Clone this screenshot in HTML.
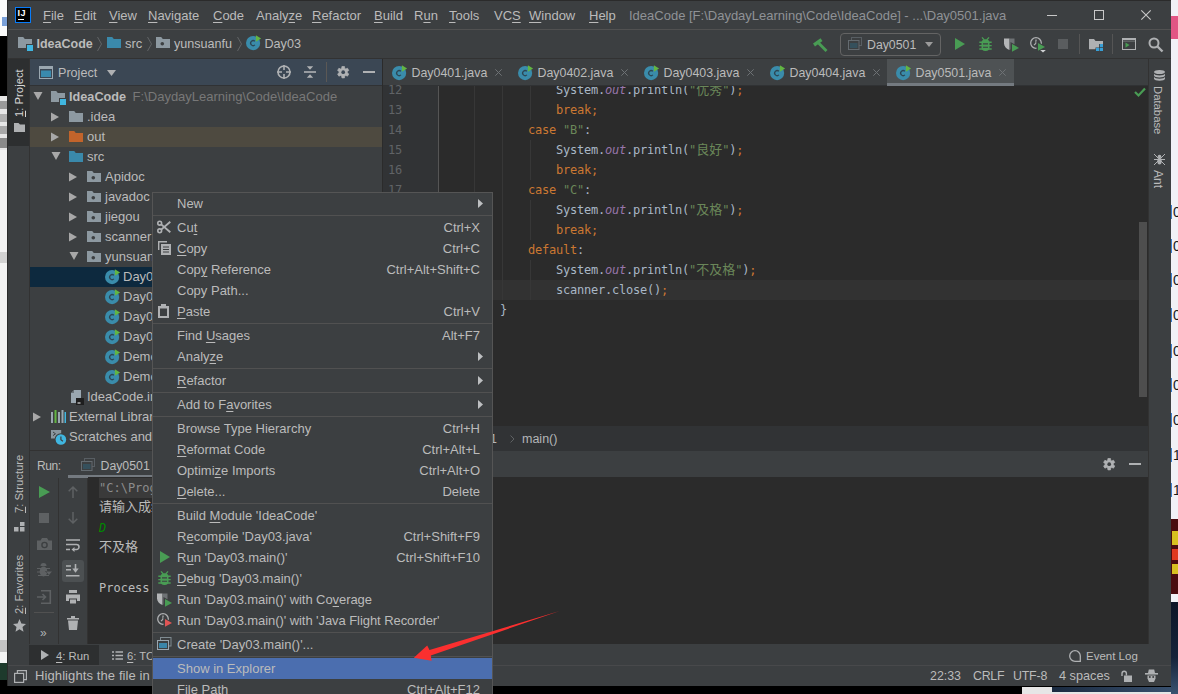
<!DOCTYPE html>
<html><head><meta charset="utf-8"><title>IdeaCode</title>
<style>
*{box-sizing:border-box;margin:0;padding:0}
html,body{width:1178px;height:694px;overflow:hidden;background:#000}
body{position:relative;font-family:"Liberation Sans","Noto Sans CJK SC",sans-serif;font-size:13px;color:#bbb;line-height:1}
.a{position:absolute}
.t{position:absolute;white-space:nowrap;line-height:16px;height:16px}
u{text-decoration:underline;text-underline-offset:2px;text-decoration-thickness:1px}
svg{position:absolute;overflow:visible}
#win{left:0;top:0;width:1178px;height:686px;background:#3c3f41;overflow:hidden}
#deskL,#deskR{z-index:5}
.mono{font-family:"DejaVu Sans Mono","Liberation Mono","Noto Sans CJK SC",monospace;font-size:12px;letter-spacing:-0.22px}
.cj{font-family:"Liberation Mono","Noto Sans CJK SC",monospace;font-size:13px;letter-spacing:0;line-height:0}
</style></head><body>
<div class="a" id="win">
<div class="a" style="left:0px;top:0px;width:1178px;height:1px;background:#2b2b2b"></div>
<div class="a" style="left:15px;top:7px;width:16px;height:16px;background:#000;border:1px solid #087cfa"><div class="a" style="left:1.500px;top:1px;font:bold 9px/9px 'Liberation Sans',sans-serif;color:#fff;letter-spacing:0.500px;transform:scaleY(1.100)">IJ</div><div class="a" style="left:2px;top:11px;width:6px;height:1px;background:#fff"></div></div>
<div class="t" style="left:43px;top:8px"><u>F</u>ile</div>
<div class="t" style="left:74px;top:8px"><u>E</u>dit</div>
<div class="t" style="left:109px;top:8px"><u>V</u>iew</div>
<div class="t" style="left:148px;top:8px"><u>N</u>avigate</div>
<div class="t" style="left:213px;top:8px"><u>C</u>ode</div>
<div class="t" style="left:256px;top:8px">Analy<u>z</u>e</div>
<div class="t" style="left:312px;top:8px"><u>R</u>efactor</div>
<div class="t" style="left:374px;top:8px"><u>B</u>uild</div>
<div class="t" style="left:414px;top:8px">R<u>u</u>n</div>
<div class="t" style="left:449px;top:8px"><u>T</u>ools</div>
<div class="t" style="left:494px;top:8px">VC<u>S</u></div>
<div class="t" style="left:529px;top:8px"><u>W</u>indow</div>
<div class="t" style="left:589px;top:8px"><u>H</u>elp</div>
<div class="t" style="left:629px;top:8px;color:#8f9296">IdeaCode [F:\DaydayLearning\Code\IdeaCode] - ...\Day0501.java</div>
<div class="a" style="left:1047px;top:15px;width:10px;height:1px;background:#c8c8c8"></div>
<div class="a" style="left:1094px;top:10px;width:10px;height:10px;border:1px solid #c8c8c8"></div>
<svg style="left:1141px;top:10px" width="10" height="10" viewBox="0 0 10 10" ><path d="M0.300 0.300L9.700 9.700M9.700 0.300L0.300 9.700" stroke="#c8c8c8" stroke-width="1.100" fill="none"/></svg>
<div class="a" style="left:8px;top:29px;width:1163px;height:1px;background:#515151"></div>

<svg style="left:17px;top:35px" width="16" height="16" viewBox="0 0 16 16" ><path d="M1 2h5.200l1.600 2H15v5H9v4H1z" fill="#8d99a1"/><rect x="10" y="10" width="6" height="6" fill="#40b6e0"/></svg>
<div class="t" style="left:36.5px;top:36px;font-weight:bold;font-size:12.500px">IdeaCode</div>
<svg style="left:96px;top:36px" width="6" height="16" viewBox="0 0 6 16" ><path d="M1.500 1L5.500 8L1.500 15" stroke="#616466" stroke-width="1" fill="none"/></svg>
<svg style="left:106px;top:35px" width="16" height="16" viewBox="0 0 16 16" ><path d="M1 2h5.200l1.600 2H15v9H1z" fill="#3a89ab"/></svg>
<div class="t" style="left:125px;top:36px">src</div>
<svg style="left:146px;top:36px" width="6" height="16" viewBox="0 0 6 16" ><path d="M1.500 1L5.500 8L1.500 15" stroke="#616466" stroke-width="1" fill="none"/></svg>
<svg style="left:155px;top:35px" width="16" height="16" viewBox="0 0 16 16" ><path d="M1 2h5.200l1.600 2H15v9H1z" fill="#8d99a1"/><circle cx="7.300" cy="8.700" r="1.800" fill="#3c3f41"/></svg>
<div class="t" style="left:174px;top:36px;font-size:12.600px">yunsuanfu</div>
<svg style="left:236px;top:36px" width="6" height="16" viewBox="0 0 6 16" ><path d="M1.500 1L5.500 8L1.500 15" stroke="#616466" stroke-width="1" fill="none"/></svg>
<svg style="left:246px;top:35px" width="16" height="16" viewBox="0 0 16 16" ><circle cx="7.100" cy="8.100" r="7.100" fill="#3a8cab"/><path d="M8.900 9.900a2.500 2.500 0 1 1 0-3.600" stroke="#2c4755" stroke-width="1.300" fill="none"/><path d="M9.900 0.200L15.100 3.500L9.900 6.800z" fill="#62b543"/></svg>
<div class="t" style="left:264.5px;top:36px;font-size:12.600px">Day03</div>
<svg style="left:813px;top:37px" width="15" height="15" viewBox="0 0 15 15" ><path d="M1 8L8.500 2.700" stroke="#499c54" stroke-width="3.400"/><path d="M5.500 6L13.500 14" stroke="#499c54" stroke-width="2.800"/></svg>
<div class="a" style="left:840px;top:33px;width:101px;height:23px;border:1px solid #646464;border-radius:4px"></div>
<svg style="left:848px;top:37px" width="14" height="13" viewBox="0 0 14 13" ><rect x="3.500" y="0.500" width="10" height="8" fill="none" stroke="#585e63"/><rect x="0.500" y="3.500" width="10.500" height="9" fill="#3c3f41" stroke="#646b70"/><rect x="2" y="6" width="7.500" height="5" fill="#35505c"/></svg>
<div class="t" style="left:867px;top:37px;font-size:12.3px">Day0501</div>
<svg style="left:925px;top:42px" width="8" height="5" viewBox="0 0 8 5" ><path d="M0 0H8L4 5z" fill="#9b9b9b"/></svg>
<svg style="left:955px;top:38px" width="10" height="12" viewBox="0 0 10 12" ><path d="M0 0L10 6L0 12z" fill="#499c54"/></svg>
<svg style="left:979px;top:37px" width="13" height="14" viewBox="0 0 13 14" ><path d="M3 0.300L5.300 3M10 0.300L7.700 3" stroke="#499c54" stroke-width="1.300" fill="none"/><rect x="2.500" y="2.300" width="8" height="11.700" rx="3.800" fill="#499c54"/><path d="M0.300 5.200h12.400M0.300 8.600h12.400M0.300 12h12.400" stroke="#499c54" stroke-width="1.400"/><path d="M4 6.900h5M4 10.300h5" stroke="#3c3f41" stroke-width="1.100"/></svg>
<svg style="left:1004px;top:38px" width="16" height="15" viewBox="0 0 16 15" ><path d="M0 0.500h5.500v11.500c-3-1.200-5.500-3.500-5.500-6.500z" fill="#b4b6b8"/><path d="M5.500 0.500H10.500v5c0 3-2.500 5.300-5 6.500z" fill="#6e7275"/><path d="M6.500 4L16 9.500L6.500 15z" fill="#3c3f41"/><path d="M8 6L15 9.900L8 13.800z" fill="#499c54"/></svg>
<svg style="left:1030px;top:37px" width="16" height="16" viewBox="0 0 16 16" ><circle cx="6" cy="6" r="5.300" fill="none" stroke="#afb1b3" stroke-width="1.300"/><path d="M6 2.500v3.700l-2 2" stroke="#afb1b3" stroke-width="1.200" fill="none"/><path d="M6.500 4L16 9.500L6.500 15z" fill="#3c3f41"/><path d="M8 6L15 9.900L8 13.800z" fill="#499c54"/><path d="M10.200 13h5.600l-2.800 2.600z" fill="#d0d2d4"/></svg>
<div class="a" style="left:1058px;top:39px;width:10px;height:10px;background:#5a5d5f"></div>
<div class="a" style="left:1079px;top:34px;width:1px;height:20px;background:#555"></div>
<svg style="left:1089px;top:39px" width="15" height="12" viewBox="0 0 15 12" ><path d="M0 0h5l1.500 2H14v3h-4v3.500H6.500V10.300H0z" fill="#afb1b3"/><rect x="10.800" y="5" width="3.200" height="3.200" fill="#389fd6"/><rect x="7" y="8.900" width="3.200" height="3.100" fill="#389fd6"/><rect x="10.800" y="8.900" width="3.200" height="3.100" fill="#389fd6"/></svg>
<div class="a" style="left:1112px;top:34px;width:1px;height:20px;background:#555"></div>
<svg style="left:1122px;top:38px" width="14" height="12" viewBox="0 0 14 12" ><rect x="0.500" y="0.500" width="13" height="11" fill="none" stroke="#afb1b3" stroke-width="1"/><rect x="0" y="0" width="14" height="2" fill="#afb1b3"/><rect x="1" y="2.700" width="12" height="0.800" fill="#afb1b3" opacity=".6"/><path d="M3.500 4.500L7.500 7L3.500 9.800z" fill="#499c54"/></svg>
<svg style="left:1148px;top:37px" width="16" height="16" viewBox="0 0 16 16" ><circle cx="6" cy="6" r="4.5" fill="none" stroke="#afb1b3" stroke-width="2"/><path d="M9.5 9.5L14.5 14.5" stroke="#afb1b3" stroke-width="2.4"/></svg>
<div class="a" style="left:8px;top:58px;width:1163px;height:1px;background:#323232"></div>

<div class="a" style="left:8px;top:59px;width:22px;height:87px;background:#2d2f30"></div>
<div class="t" style="left:11px;top:117px;transform-origin:0 0;transform:rotate(-90deg);color:#d6d6d6;font-size:11.300px"><u>1</u>: Project</div>
<svg style="left:14px;top:123px" width="11" height="9" viewBox="0 0 11 9" ><path d="M0 0h4.500l1.500 1.500H11V9H0z" fill="#afb1b3"/></svg>
<div class="t" style="left:11px;top:513px;transform-origin:0 0;transform:rotate(-90deg);color:#bbb;font-size:11.300px"><u>7</u>: Structure</div>
<svg style="left:14px;top:522px" width="11" height="10" viewBox="0 0 11 10" ><rect x="0" y="5" width="4.5" height="4.5" fill="#afb1b3"/><rect x="6" y="5" width="4.5" height="4.5" fill="#afb1b3"/><rect x="6" y="0" width="4.5" height="4" fill="#afb1b3"/></svg>
<div class="t" style="left:11px;top:614px;transform-origin:0 0;transform:rotate(-90deg);color:#bbb;font-size:11.300px"><u>2</u>: Favorites</div>
<svg style="left:13px;top:619px" width="13" height="13" viewBox="0 0 13 13" ><path d="M6.5 0l1.9 4.4 4.6.5-3.5 3.2 1 4.7-4-2.5-4 2.5 1-4.7L0 4.9l4.6-.5z" fill="#afb1b3"/></svg>
<div class="a" style="left:29px;top:59px;width:1px;height:585px;background:#323232"></div>

<div class="a" style="left:30px;top:59px;width:352px;height:26px;background:#3b4754"></div>
<svg style="left:39px;top:66px" width="14" height="13" viewBox="0 0 14 13" ><rect x="0.5" y="0.5" width="13" height="12" fill="none" stroke="#9aa7b0"/><rect x="0" y="0" width="14" height="3" fill="#9aa7b0"/><rect x="2" y="4.5" width="10" height="6.5" fill="#3a8aad"/></svg>
<div class="t" style="left:58px;top:65px;font-size:12.600px">Project</div>
<svg style="left:107px;top:70px" width="9" height="6" viewBox="0 0 9 6" ><path d="M0 0H9L4.5 6z" fill="#afb1b3"/></svg>
<svg style="left:277px;top:65px" width="14" height="14" viewBox="0 0 14 14" ><circle cx="7" cy="7" r="6" fill="none" stroke="#afb1b3" stroke-width="1.6"/><path d="M7 0v5M7 9v5M0 7h5M9 7h5" stroke="#afb1b3" stroke-width="1.6"/></svg>
<svg style="left:304px;top:65px" width="12" height="14" viewBox="0 0 12 14" ><path d="M0 7h12" stroke="#afb1b3" stroke-width="1.6"/><path d="M2.800 1.300h6.400L6 4.800zM6 9.200L9.200 12.700h-6.400z" fill="#afb1b3"/></svg>
<div class="a" style="left:326px;top:62px;width:1px;height:20px;background:#5b5855"></div>
<svg style="left:336.8px;top:65.8px" width="12.4" height="12.4" viewBox="0 0 14 14" ><path d="M5.32 2.61L5.56 0.56L8.44 0.56L8.68 2.61L9.96 3.35L11.86 2.53L13.30 5.03L11.64 6.26L11.64 7.74L13.30 8.97L11.86 11.47L9.96 10.65L8.68 11.39L8.44 13.44L5.56 13.44L5.32 11.39L4.04 10.65L2.14 11.47L0.70 8.97L2.36 7.74L2.36 6.26L0.70 5.03L2.14 2.53L4.04 3.35z" fill="#afb1b3" stroke="#afb1b3" stroke-width="0.800" stroke-linejoin="round"/><circle cx="7" cy="7" r="2.100" fill="#3b4754"/></svg>
<div class="a" style="left:363px;top:71px;width:12px;height:2px;background:#afb1b3"></div>
<div class="a" style="left:30px;top:85px;width:352px;height:560px;background:#3c3f41"></div>
<div class="a" style="left:30px;top:85px;width:352px;height:1px;background:#303234"></div>
<div class="a" style="left:382px;top:59px;width:1px;height:586px;background:#2b2b2b"></div>
<div class="a" style="left:30px;top:127px;width:352px;height:20px;background:#4e4a40"></div>
<div class="a" style="left:30px;top:267px;width:352px;height:20px;background:#0d293e"></div>
<svg style="left:33px;top:92px" width="10" height="8" viewBox="0 0 10 8" ><path d="M0.500 0H9.500L5 8z" fill="#a8a8a8"/></svg>
<svg style="left:50px;top:89px" width="16" height="16" viewBox="0 0 16 16" ><path d="M1 2h5.200l1.600 2H15v5H9v4H1z" fill="#8d99a1"/><rect x="10" y="10" width="6" height="6" fill="#40b6e0"/></svg>
<div class="t" style="left:69px;top:89px"><b style="font-size:12.700px">IdeaCode</b><span style="color:#787878;margin-left:6.500px">F:\DaydayLearning\Code\IdeaCode</span></div>
<svg style="left:51px;top:112px" width="8" height="10" viewBox="0 0 8 10" ><path d="M0 0.500L8 5L0 9.500z" fill="#a8a8a8"/></svg>
<svg style="left:68px;top:109px" width="16" height="16" viewBox="0 0 16 16" ><path d="M1 2h5.200l1.600 2H15v9H1z" fill="#8d99a1"/></svg>
<div class="t" style="left:87px;top:109px">.idea</div>
<svg style="left:51px;top:132px" width="8" height="10" viewBox="0 0 8 10" ><path d="M0 0.500L8 5L0 9.500z" fill="#a8a8a8"/></svg>
<svg style="left:68px;top:129px" width="16" height="16" viewBox="0 0 16 16" ><path d="M1 2h5.200l1.600 2H15v9H1z" fill="#c2642b"/></svg>
<div class="t" style="left:87px;top:129px">out</div>
<svg style="left:51px;top:152px" width="10" height="8" viewBox="0 0 10 8" ><path d="M0.500 0H9.500L5 8z" fill="#a8a8a8"/></svg>
<svg style="left:68px;top:149px" width="16" height="16" viewBox="0 0 16 16" ><path d="M1 2h5.200l1.600 2H15v9H1z" fill="#3a89ab"/></svg>
<div class="t" style="left:87px;top:149px">src</div>
<svg style="left:69px;top:172px" width="8" height="10" viewBox="0 0 8 10" ><path d="M0 0.500L8 5L0 9.500z" fill="#a8a8a8"/></svg>
<svg style="left:86px;top:169px" width="16" height="16" viewBox="0 0 16 16" ><path d="M1 2h5.200l1.600 2H15v9H1z" fill="#8d99a1"/><circle cx="7.300" cy="8.700" r="1.800" fill="#3c3f41"/></svg>
<div class="t" style="left:105px;top:169px">Apidoc</div>
<svg style="left:69px;top:192px" width="8" height="10" viewBox="0 0 8 10" ><path d="M0 0.500L8 5L0 9.500z" fill="#a8a8a8"/></svg>
<svg style="left:86px;top:189px" width="16" height="16" viewBox="0 0 16 16" ><path d="M1 2h5.200l1.600 2H15v9H1z" fill="#8d99a1"/><circle cx="7.300" cy="8.700" r="1.800" fill="#3c3f41"/></svg>
<div class="t" style="left:105px;top:189px">javadoc</div>
<svg style="left:69px;top:212px" width="8" height="10" viewBox="0 0 8 10" ><path d="M0 0.500L8 5L0 9.500z" fill="#a8a8a8"/></svg>
<svg style="left:86px;top:209px" width="16" height="16" viewBox="0 0 16 16" ><path d="M1 2h5.200l1.600 2H15v9H1z" fill="#8d99a1"/><circle cx="7.300" cy="8.700" r="1.800" fill="#3c3f41"/></svg>
<div class="t" style="left:105px;top:209px">jiegou</div>
<svg style="left:69px;top:232px" width="8" height="10" viewBox="0 0 8 10" ><path d="M0 0.500L8 5L0 9.500z" fill="#a8a8a8"/></svg>
<svg style="left:86px;top:229px" width="16" height="16" viewBox="0 0 16 16" ><path d="M1 2h5.200l1.600 2H15v9H1z" fill="#8d99a1"/><circle cx="7.300" cy="8.700" r="1.800" fill="#3c3f41"/></svg>
<div class="t" style="left:105px;top:229px">scanner</div>
<svg style="left:69px;top:252px" width="10" height="8" viewBox="0 0 10 8" ><path d="M0.500 0H9.500L5 8z" fill="#a8a8a8"/></svg>
<svg style="left:86px;top:249px" width="16" height="16" viewBox="0 0 16 16" ><path d="M1 2h5.200l1.600 2H15v9H1z" fill="#8d99a1"/><circle cx="7.300" cy="8.700" r="1.800" fill="#3c3f41"/></svg>
<div class="t" style="left:105px;top:249px">yunsuanfu</div>
<svg style="left:105px;top:269px" width="16" height="16" viewBox="0 0 16 16" ><circle cx="7.100" cy="8.100" r="7.100" fill="#3a8cab"/><path d="M8.900 9.900a2.500 2.500 0 1 1 0-3.600" stroke="#2c4755" stroke-width="1.300" fill="none"/><path d="M9.900 0.200L15.100 3.500L9.900 6.800z" fill="#62b543"/></svg>
<div class="t" style="left:123px;top:269px">Day01</div>
<svg style="left:105px;top:289px" width="16" height="16" viewBox="0 0 16 16" ><circle cx="7.100" cy="8.100" r="7.100" fill="#3a8cab"/><path d="M8.900 9.900a2.500 2.500 0 1 1 0-3.600" stroke="#2c4755" stroke-width="1.300" fill="none"/><path d="M9.900 0.200L15.100 3.500L9.900 6.800z" fill="#62b543"/></svg>
<div class="t" style="left:123px;top:289px">Day02</div>
<svg style="left:105px;top:309px" width="16" height="16" viewBox="0 0 16 16" ><circle cx="7.100" cy="8.100" r="7.100" fill="#3a8cab"/><path d="M8.900 9.900a2.500 2.500 0 1 1 0-3.600" stroke="#2c4755" stroke-width="1.300" fill="none"/><path d="M9.900 0.200L15.100 3.500L9.900 6.800z" fill="#62b543"/></svg>
<div class="t" style="left:123px;top:309px">Day03</div>
<svg style="left:105px;top:329px" width="16" height="16" viewBox="0 0 16 16" ><circle cx="7.100" cy="8.100" r="7.100" fill="#3a8cab"/><path d="M8.900 9.900a2.500 2.500 0 1 1 0-3.600" stroke="#2c4755" stroke-width="1.300" fill="none"/><path d="M9.900 0.200L15.100 3.500L9.900 6.800z" fill="#62b543"/></svg>
<div class="t" style="left:123px;top:329px">Day04</div>
<svg style="left:105px;top:349px" width="16" height="16" viewBox="0 0 16 16" ><circle cx="7.100" cy="8.100" r="7.100" fill="#3a8cab"/><path d="M8.900 9.900a2.500 2.500 0 1 1 0-3.600" stroke="#2c4755" stroke-width="1.300" fill="none"/><path d="M9.900 0.200L15.100 3.500L9.900 6.800z" fill="#62b543"/></svg>
<div class="t" style="left:123px;top:349px">Demo01</div>
<svg style="left:105px;top:369px" width="16" height="16" viewBox="0 0 16 16" ><circle cx="7.100" cy="8.100" r="7.100" fill="#3a8cab"/><path d="M8.900 9.900a2.500 2.500 0 1 1 0-3.600" stroke="#2c4755" stroke-width="1.300" fill="none"/><path d="M9.900 0.200L15.100 3.500L9.900 6.800z" fill="#62b543"/></svg>
<div class="t" style="left:123px;top:369px">Demo02</div>
<svg style="left:68px;top:389px" width="16" height="16" viewBox="0 0 16 16" ><path d="M6 1h7v13H3V4z" fill="#9aa7b0"/><path d="M3 4h3V1z" fill="#3c3f41" opacity=".5"/><rect x="8" y="9" width="8" height="7" fill="#1e1e1e"/><rect x="9.500" y="13.500" width="3" height="1" fill="#fff"/></svg>
<div class="t" style="left:87px;top:389px">IdeaCode.iml</div>
<svg style="left:33px;top:412px" width="8" height="10" viewBox="0 0 8 10" ><path d="M0 0.500L8 5L0 9.500z" fill="#a8a8a8"/></svg>
<svg style="left:50px;top:409px" width="16" height="16" viewBox="0 0 16 16" ><rect x="1" y="3" width="2" height="11" fill="#9aa7b0"/><rect x="4.5" y="1" width="2" height="13" fill="#62b543"/><rect x="8" y="3" width="2" height="11" fill="#9aa7b0"/><rect x="11.500" y="1" width="2" height="13" fill="#9aa7b0"/><rect x="14.5" y="3" width="1.500" height="11" fill="#40b6e0"/></svg>
<div class="t" style="left:69px;top:409px">External Libraries</div>
<svg style="left:50px;top:429px" width="16" height="16" viewBox="0 0 16 16" ><path d="M1 1h10.200v8.500H1z" fill="#8b979f"/><path d="M3 3l2.500 1.800L3 6.600" stroke="#3c3f41" fill="none"/><circle cx="10.900" cy="10.500" r="6.300" fill="#3c3f41"/><circle cx="10.900" cy="10.500" r="5.300" fill="#40b6e0"/><path d="M10.900 7.500v3.200l2 1.500" stroke="#3c3f41" stroke-width="1.200" fill="none"/></svg>
<div class="t" style="left:69px;top:429px">Scratches and Consoles</div>

<div class="a" style="left:383px;top:59px;width:765px;height:27px;background:#3c3f41"></div>
<div class="a" style="left:383px;top:85px;width:765px;height:1px;background:#303234"></div>
<div class="a" style="left:887px;top:59px;width:127px;height:27px;background:#4e5254"></div>
<div class="a" style="left:887px;top:83px;width:127px;height:3px;background:#747a80"></div>
<svg style="left:392px;top:65px" width="16" height="16" viewBox="0 0 16 16" ><circle cx="7.100" cy="8.100" r="7.100" fill="#3a8cab"/><path d="M8.900 9.900a2.500 2.500 0 1 1 0-3.600" stroke="#2c4755" stroke-width="1.300" fill="none"/><path d="M9.900 0.200L15.100 3.500L9.900 6.800z" fill="#62b543"/></svg>
<div class="t" style="left:411.5px;top:65px;font-size:12.400px">Day0401.java</div>
<svg style="left:495px;top:69px" width="7" height="7" viewBox="0 0 7 7" ><path d="M0.300 0.300L6.700 6.700M6.700 0.300L0.300 6.700" stroke="#6e7275" stroke-width="1" fill="none"/></svg>
<svg style="left:518px;top:65px" width="16" height="16" viewBox="0 0 16 16" ><circle cx="7.100" cy="8.100" r="7.100" fill="#3a8cab"/><path d="M8.900 9.900a2.500 2.500 0 1 1 0-3.600" stroke="#2c4755" stroke-width="1.300" fill="none"/><path d="M9.900 0.200L15.100 3.500L9.900 6.800z" fill="#62b543"/></svg>
<div class="t" style="left:537.5px;top:65px;font-size:12.400px">Day0402.java</div>
<svg style="left:621px;top:69px" width="7" height="7" viewBox="0 0 7 7" ><path d="M0.300 0.300L6.700 6.700M6.700 0.300L0.300 6.700" stroke="#6e7275" stroke-width="1" fill="none"/></svg>
<svg style="left:644px;top:65px" width="16" height="16" viewBox="0 0 16 16" ><circle cx="7.100" cy="8.100" r="7.100" fill="#3a8cab"/><path d="M8.900 9.900a2.500 2.500 0 1 1 0-3.600" stroke="#2c4755" stroke-width="1.300" fill="none"/><path d="M9.900 0.200L15.100 3.500L9.900 6.800z" fill="#62b543"/></svg>
<div class="t" style="left:663.5px;top:65px;font-size:12.400px">Day0403.java</div>
<svg style="left:747px;top:69px" width="7" height="7" viewBox="0 0 7 7" ><path d="M0.300 0.300L6.700 6.700M6.700 0.300L0.300 6.700" stroke="#6e7275" stroke-width="1" fill="none"/></svg>
<svg style="left:770px;top:65px" width="16" height="16" viewBox="0 0 16 16" ><circle cx="7.100" cy="8.100" r="7.100" fill="#3a8cab"/><path d="M8.900 9.900a2.500 2.500 0 1 1 0-3.600" stroke="#2c4755" stroke-width="1.300" fill="none"/><path d="M9.900 0.200L15.100 3.500L9.900 6.800z" fill="#62b543"/></svg>
<div class="t" style="left:789.5px;top:65px;font-size:12.400px">Day0404.java</div>
<svg style="left:873px;top:69px" width="7" height="7" viewBox="0 0 7 7" ><path d="M0.300 0.300L6.700 6.700M6.700 0.300L0.300 6.700" stroke="#6e7275" stroke-width="1" fill="none"/></svg>
<svg style="left:896px;top:65px" width="16" height="16" viewBox="0 0 16 16" ><circle cx="7.100" cy="8.100" r="7.100" fill="#3a8cab"/><path d="M8.900 9.900a2.500 2.500 0 1 1 0-3.600" stroke="#2c4755" stroke-width="1.300" fill="none"/><path d="M9.900 0.200L15.100 3.500L9.900 6.800z" fill="#62b543"/></svg>
<div class="t" style="left:915.5px;top:65px;font-size:12.400px">Day0501.java</div>
<svg style="left:999px;top:69px" width="7" height="7" viewBox="0 0 7 7" ><path d="M0.300 0.300L6.700 6.700M6.700 0.300L0.300 6.700" stroke="#6e7275" stroke-width="1" fill="none"/></svg>
<div class="a" style="left:383px;top:86px;width:765px;height:344px;background:#2b2b2b"></div>
<div class="a" style="left:383px;top:86px;width:55px;height:340px;background:#313335"></div>
<div class="a" style="left:438px;top:86px;width:1px;height:340px;background:#555"></div>
<div class="a" style="left:439px;top:280px;width:709px;height:20px;background:#323232"></div>
<div class="a" style="left:474px;top:86px;width:1px;height:340px;background:#373737"></div>
<div class="a" style="left:502px;top:86px;width:1px;height:214px;background:#373737"></div>
<div class="a" style="left:530px;top:86px;width:1px;height:34px;background:#373737"></div>
<div class="a" style="left:530px;top:140px;width:1px;height:40px;background:#373737"></div>
<div class="a" style="left:530px;top:200px;width:1px;height:40px;background:#373737"></div>
<div class="a" style="left:530px;top:260px;width:1px;height:40px;background:#373737"></div>
<div class="t mono" style="left:388px;top:82px;color:#606366">12</div>
<div class="t mono" style="left:388px;top:102px;color:#606366">13</div>
<div class="t mono" style="left:388px;top:122px;color:#606366">14</div>
<div class="t mono" style="left:388px;top:142px;color:#606366">15</div>
<div class="t mono" style="left:388px;top:162px;color:#606366">16</div>
<div class="t mono" style="left:388px;top:182px;color:#606366">17</div>
<div class="a" style="left:439px;top:86px;width:709px;height:340px;overflow:hidden"><div class="t mono" style="left:117px;top:-4px;color:#a9b7c6">System.<span style="color:#9876aa;font-style:italic">out</span>.println(<span style="color:#6a8759">"<span class="cj">优秀</span>"</span>)<span style="color:#cc7832">;</span></div><div class="t mono" style="left:117px;top:16px;color:#a9b7c6"><span style="color:#cc7832">break;</span></div><div class="t mono" style="left:89px;top:36px;color:#a9b7c6"><span style="color:#cc7832">case </span><span style="color:#6a8759">"B"</span>:</div><div class="t mono" style="left:117px;top:56px;color:#a9b7c6">System.<span style="color:#9876aa;font-style:italic">out</span>.println(<span style="color:#6a8759">"<span class="cj">良好</span>"</span>)<span style="color:#cc7832">;</span></div><div class="t mono" style="left:117px;top:76px;color:#a9b7c6"><span style="color:#cc7832">break;</span></div><div class="t mono" style="left:89px;top:96px;color:#a9b7c6"><span style="color:#cc7832">case </span><span style="color:#6a8759">"C"</span>:</div><div class="t mono" style="left:117px;top:116px;color:#a9b7c6">System.<span style="color:#9876aa;font-style:italic">out</span>.println(<span style="color:#6a8759">"<span class="cj">及格</span>"</span>)<span style="color:#cc7832">;</span></div><div class="t mono" style="left:117px;top:136px;color:#a9b7c6"><span style="color:#cc7832">break;</span></div><div class="t mono" style="left:89px;top:156px;color:#a9b7c6"><span style="color:#cc7832">default</span>:</div><div class="t mono" style="left:117px;top:176px;color:#a9b7c6">System.<span style="color:#9876aa;font-style:italic">out</span>.println(<span style="color:#6a8759">"<span class="cj">不及格</span>"</span>)<span style="color:#cc7832">;</span></div><div class="t mono" style="left:117px;top:196px;color:#a9b7c6">scanner.close()<span style="color:#cc7832">;</span></div><div class="t mono" style="left:61px;top:216px;color:#a9b7c6">}</div></div>
<svg style="left:1134px;top:87px" width="12" height="10" viewBox="0 0 12 10" ><path d="M1 5l3.500 3.500L11 1.500" stroke="#499c54" stroke-width="2.200" fill="none"/></svg>
<div class="a" style="left:1139px;top:222px;width:8px;height:175px;background:#4e4e4e"></div>
<div class="a" style="left:383px;top:426px;width:765px;height:25px;background:#313335"></div>
<div class="t" style="left:522px;top:431px;color:#b4b6b8;font-size:12.500px">main()</div>
<svg style="left:509.5px;top:435px" width="5" height="8" viewBox="0 0 5 8" ><path d="M0.500 0.500L4 4L0.500 7.500" stroke="#5e6163" fill="none"/></svg>
<div class="t" style="left:490px;top:431px;color:#b4b6b8;font-size:12.500px">1</div>

<div class="a" style="left:30px;top:451px;width:1118px;height:26px;background:#3c3f41"></div>
<div class="a" style="left:30px;top:450px;width:352px;height:1px;background:#323232"></div>
<div class="t" style="left:37px;top:458px;font-size:12px;letter-spacing:-0.400px">Run:</div>
<svg style="left:81px;top:458px" width="14" height="13" viewBox="0 0 14 13" ><rect x="3.500" y="0.500" width="10" height="8" fill="none" stroke="#585e63"/><rect x="0.500" y="3.500" width="10.500" height="9" fill="#3c3f41" stroke="#646b70"/><rect x="2" y="6" width="7.500" height="5" fill="#35505c"/></svg>
<div class="t" style="left:100.5px;top:458px;font-size:12.300px">Day0501</div>
<div class="a" style="left:68px;top:475px;width:100px;height:3px;background:#747a80"></div>
<svg style="left:1102.8px;top:457.8px" width="12.4" height="12.4" viewBox="0 0 14 14" ><path d="M5.32 2.61L5.56 0.56L8.44 0.56L8.68 2.61L9.96 3.35L11.86 2.53L13.30 5.03L11.64 6.26L11.64 7.74L13.30 8.97L11.86 11.47L9.96 10.65L8.68 11.39L8.44 13.44L5.56 13.44L5.32 11.39L4.04 10.65L2.14 11.47L0.70 8.97L2.36 7.74L2.36 6.26L0.70 5.03L2.14 2.53L4.04 3.35z" fill="#afb1b3" stroke="#afb1b3" stroke-width="0.800" stroke-linejoin="round"/><circle cx="7" cy="7" r="2.100" fill="#3c3f41"/></svg>
<div class="a" style="left:1129px;top:463px;width:12px;height:2px;background:#afb1b3"></div>
<div class="a" style="left:88px;top:477px;width:1060px;height:167px;background:#2b2b2b"></div>
<div class="a" style="left:58px;top:478px;width:1px;height:166px;background:#323232"></div>
<div class="a" style="left:87px;top:478px;width:1px;height:166px;background:#323232"></div>
<div class="a" style="left:99px;top:478px;width:60px;height:20px;background:#3a3a3a"></div>
<svg style="left:39px;top:486px" width="11" height="12" viewBox="0 0 11 12" ><path d="M0 0L11 6L0 12z" fill="#499c54"/></svg>
<div class="a" style="left:39px;top:513px;width:10px;height:10px;background:#5e6163"></div>
<svg style="left:37px;top:538px" width="15" height="12" viewBox="0 0 15 12" ><path d="M0 2.500h3.500L5 0h5l1.500 2.500H15V12H0z" fill="#5e6163"/><circle cx="7.500" cy="7" r="2.600" fill="none" stroke="#3c3f41" stroke-width="1.400"/></svg>
<svg style="left:37px;top:563px" width="15" height="15" viewBox="0 0 15 15" ><ellipse cx="6.500" cy="8.500" rx="3.800" ry="5" fill="#5e6163"/><path d="M3.500 3a3 3 0 0 1 6 0z" fill="#5e6163"/><path d="M0 5.500h13M0 9h13M1 12.500h11" stroke="#5e6163" stroke-width="1.200"/><path d="M8 8h7l-3.500 4z" fill="#3c3f41"/><path d="M9 8.500h6l-3 3.500z" fill="#5e6163"/></svg>
<svg style="left:37px;top:590px" width="14" height="14" viewBox="0 0 14 14" ><path d="M4 0.700h9.300v12.600H4" fill="none" stroke="#5e6163" stroke-width="1.600"/><path d="M0 7h8M5.500 4l3 3-3 3" fill="none" stroke="#5e6163" stroke-width="1.600"/></svg>
<div class="a" style="left:34px;top:612px;width:20px;height:1px;background:#515151"></div>
<div class="t" style="left:40px;top:625px;color:#afb1b3;font-size:12px">&raquo;</div>
<svg style="left:68px;top:486px" width="10" height="12" viewBox="0 0 10 12" ><path d="M5 12V1M0.700 5.300L5 1l4.300 4.300" fill="none" stroke="#5e6163" stroke-width="1.500"/></svg>
<svg style="left:68px;top:512px" width="10" height="12" viewBox="0 0 10 12" ><path d="M5 0v11M0.700 6.700L5 11l4.300-4.300" fill="none" stroke="#5e6163" stroke-width="1.500"/></svg>
<svg style="left:66px;top:539px" width="14" height="12" viewBox="0 0 14 12" ><path d="M0 1h14M0 5.500h10.500a2.500 2.500 0 0 1 0 5H7M0 10.500h4" fill="none" stroke="#afb1b3" stroke-width="1.500"/><path d="M8.500 8L5.500 10.500l3 2.500z" fill="#afb1b3"/></svg>
<div class="a" style="left:62px;top:560px;width:22px;height:22px;background:#4c5052;border-radius:3px"></div>
<svg style="left:66px;top:564px" width="14" height="13" viewBox="0 0 14 13" ><path d="M0 11.700h13.500M0 2h5M0 5.700h5" stroke="#afb1b3" stroke-width="1.500"/><path d="M9.500 0v6" stroke="#afb1b3" stroke-width="1.600"/><path d="M6.300 4.500h6.400L9.500 8.700z" fill="#afb1b3"/></svg>
<svg style="left:66px;top:590px" width="14" height="14" viewBox="0 0 14 14" ><rect x="3" y="0" width="8" height="3" fill="#afb1b3"/><path d="M0 4.500h14V11H0z" fill="#afb1b3"/><rect x="3" y="8.500" width="8" height="5" fill="#3c3f41"/><rect x="4" y="9.500" width="6" height="4" fill="#afb1b3"/></svg>
<svg style="left:67px;top:616px" width="12" height="14" viewBox="0 0 12 14" ><path d="M0 2h12v1.600H0zM4 0h4v2H4zM1 4.500h10L10 14H2z" fill="#afb1b3"/></svg>
<div class="t" style="left:99px;top:480px;font-family:'DejaVu Sans Mono','Noto Sans CJK SC',monospace;font-size:12px;color:#8c8c8c;width:53px;overflow:hidden">"C:\Program Files</div>
<div class="t" style="left:99px;top:499px;font-size:13px;color:#bbb;font-family:'Liberation Sans','Noto Sans CJK SC',sans-serif;width:53px;overflow:hidden">请输入成绩</div>
<div class="t" style="left:99px;top:520px;font-family:'DejaVu Sans Mono','Noto Sans CJK SC',monospace;font-size:12px;color:#008a00;font-style:italic">D</div>
<div class="t" style="left:99px;top:539px;font-size:13px;color:#bbb;font-family:'Liberation Sans','Noto Sans CJK SC',sans-serif">不及格</div>
<div class="t" style="left:99px;top:580px;font-family:'DejaVu Sans Mono','Noto Sans CJK SC',monospace;font-size:12px;color:#bbb;width:53px;overflow:hidden">Process finished</div>

<div class="a" style="left:1148px;top:59px;width:23px;height:586px;background:#3c3f41"></div>
<div class="a" style="left:1148px;top:59px;width:1px;height:586px;background:#323232"></div>
<svg style="left:1154px;top:70px" width="11" height="12" viewBox="0 0 11 12" ><ellipse cx="5.500" cy="2" rx="5.500" ry="2" fill="#afb1b3"/><path d="M0 3.500c0 2.500 11 2.500 11 0v2c0 2.500-11 2.500-11 0zM0 6.800c0 2.500 11 2.500 11 0v2c0 2.500-11 2.500-11 0z" fill="#afb1b3"/></svg>
<div class="t" style="left:1166px;top:86px;transform-origin:0 0;transform:rotate(90deg);font-size:11.300px;">Database</div>
<svg style="left:1154px;top:153px" width="11" height="12" viewBox="0 0 11 12" ><ellipse cx="5.500" cy="8" rx="2.200" ry="3.500" fill="#afb1b3"/><circle cx="5.500" cy="3.500" r="1.800" fill="#afb1b3"/><path d="M0 1l4 4M11 1l-4 4M0 6.500l4 0M11 6.500l-4 0M0 12l4-4M11 12l-4-4" stroke="#afb1b3" stroke-width="1"/></svg>
<div class="t" style="left:1166px;top:170px;transform-origin:0 0;transform:rotate(90deg);font-size:11.300px;font-size:12px">Ant</div>

<div class="a" style="left:8px;top:644px;width:1163px;height:21px;background:#3c3f41"></div>
<div class="a" style="left:29px;top:645px;width:70px;height:20px;background:#2d2f30"></div>
<svg style="left:41px;top:650px" width="8" height="10" viewBox="0 0 8 10" ><path d="M0 0L8 5L0 10z" fill="#afb1b3"/></svg>
<div class="t" style="left:56px;top:648px;font-size:11.300px"><u>4</u>: Run</div>
<svg style="left:112px;top:651px" width="11" height="9" viewBox="0 0 11 9" ><path d="M0 1h2M0 4.500h2M0 8h2M3.500 1H11M3.500 4.500H11M3.500 8H11" stroke="#afb1b3" stroke-width="1.600"/></svg>
<div class="t" style="left:127px;top:648px;font-size:11.300px"><u>6</u>: TODO</div>
<svg style="left:1069px;top:650px" width="12" height="12" viewBox="0 0 12 12" ><path d="M6 0.700A5.300 5.300 0 1 0 6 11.300H11.300V6A5.300 5.300 0 0 0 6 0.700z" fill="none" stroke="#afb1b3" stroke-width="1.300"/></svg>
<div class="t" style="left:1086px;top:648px;font-size:11.500px">Event Log</div>
<div class="a" style="left:8px;top:665px;width:1163px;height:1px;background:#48494b"></div>
<div class="a" style="left:8px;top:666px;width:1163px;height:20px;background:#3c3f41"></div>
<svg style="left:14px;top:670px" width="13" height="13" viewBox="0 0 13 13" ><rect x="0.600" y="3.400" width="9" height="9" fill="none" stroke="#afb1b3" stroke-width="1.200"/><path d="M3.400 3.400v-2.800h9v9h-2.800" fill="none" stroke="#afb1b3" stroke-width="1.200"/></svg>
<div class="t" style="left:35px;top:668px;letter-spacing:0.100px">Highlights the file in</div>
<div class="t" style="left:930px;top:668px;font-size:12.400px">22:33</div>
<div class="t" style="left:973px;top:668px;font-size:12.400px;letter-spacing:-0.300px">CRLF</div>
<div class="t" style="left:1013px;top:668px;font-size:12.400px;letter-spacing:-0.200px">UTF-8</div>
<div class="t" style="left:1059px;top:668px;font-size:12.700px">4 spaces</div>
<svg style="left:1121px;top:670px" width="11" height="12" viewBox="0 0 11 12" ><rect x="3" y="5.500" width="8" height="6.500" fill="#afb1b3"/><path d="M1 6V3.500a2.200 2.200 0 0 1 4.400 0V5.500" fill="none" stroke="#afb1b3" stroke-width="1.400"/></svg>
<svg style="left:1145px;top:669px" width="13" height="13" viewBox="0 0 13 13" ><path d="M3 4l.8-3.500h5.400L10 4z" fill="#afb1b3"/><rect x="0" y="4" width="13" height="1.600" fill="#afb1b3"/><path d="M2.500 6.500h8v3l-1.500 3.500h-5L2.500 9.500z" fill="#afb1b3"/><circle cx="4.800" cy="8" r="1" fill="#3c3f41"/><circle cx="8.200" cy="8" r="1" fill="#3c3f41"/></svg>

</div>
<div class="a" style="left:0px;top:0px;width:8px;height:36px;background:#fbfbfb"></div>
<div class="a" style="left:2px;top:17px;width:5px;height:9px;background:#7aa0d8"></div>
<div class="a" style="left:0px;top:36px;width:8px;height:60px;background:#000"></div>
<div class="a" style="left:0px;top:96px;width:8px;height:54px;background:#e6e6e6"></div>
<div class="a" style="left:0px;top:101px;width:8px;height:8px;background:#9a9a9a"></div>
<div class="a" style="left:0px;top:114px;width:8px;height:8px;background:#b0b0b0"></div>
<div class="a" style="left:0px;top:126px;width:8px;height:8px;background:#a8a8a8"></div>
<div class="a" style="left:0px;top:138px;width:8px;height:10px;background:#8a8a8a"></div>
<div class="a" style="left:0px;top:150px;width:8px;height:330px;background:#f3f3f3"></div>
<div class="a" style="left:0px;top:252px;width:8px;height:11px;background:#d2d2d2"></div>
<div class="a" style="left:0px;top:480px;width:8px;height:160px;background:#ebebeb"></div>
<div class="a" style="left:0px;top:640px;width:8px;height:12px;background:#c4c4c4"></div>
<div class="a" style="left:0px;top:652px;width:8px;height:11px;background:#f4f4f4"></div>
<div class="a" style="left:0px;top:663px;width:8px;height:17px;background:#1d3a2c"></div>
<div class="a" style="left:0px;top:680px;width:8px;height:14px;background:#000"></div>
<div class="a" style="left:7px;top:0px;width:1px;height:686px;background:#2b2b2b"></div>
<div class="a" style="left:8px;top:686px;width:1170px;height:8px;background:#000"></div>
<div class="a" style="left:1022px;top:687px;width:30px;height:7px;background:#e6e6e6"></div>
<div class="a" style="left:1052px;top:687px;width:126px;height:5px;background:linear-gradient(90deg,#1a2a40,#3a5270)"></div>
<div class="a" style="left:1052px;top:692px;width:126px;height:2px;background:#e6e6e6"></div>
<div class="a" style="left:1171px;top:0px;width:7px;height:694px;background:#f1f1f6"></div>
<div class="a" style="left:1171px;top:16px;width:7px;height:23px;background:#e25584"></div>
<div class="a" style="left:1171px;top:519px;width:7px;height:75px;background:#4a0c10"></div>
<div class="a" style="left:1172px;top:531px;width:6px;height:14px;background:#d8c020"></div>
<div class="a" style="left:1172px;top:549px;width:6px;height:11px;background:#e03820"></div>
<div class="a" style="left:1172px;top:564px;width:6px;height:10px;background:#d8c020"></div>
<div class="a" style="left:1171px;top:602px;width:7px;height:92px;background:linear-gradient(180deg,#0c1426,#16233a 60%,#3a5270)"></div>
<div class="t" style="left:1173px;top:204px;font-size:14px;color:#1a1a1a;z-index:6">0</div>
<div class="a" style="left:1171px;top:205px;width:1px;height:14px;background:#3b7fd0;z-index:6"></div>
<div class="t" style="left:1173px;top:238px;font-size:14px;color:#1a1a1a;z-index:6">0</div>
<div class="a" style="left:1171px;top:239px;width:1px;height:14px;background:#3b7fd0;z-index:6"></div>
<div class="t" style="left:1173px;top:272px;font-size:14px;color:#1a1a1a;z-index:6">0</div>
<div class="a" style="left:1171px;top:273px;width:1px;height:14px;background:#3b7fd0;z-index:6"></div>
<div class="t" style="left:1173px;top:307px;font-size:14px;color:#1a1a1a;z-index:6">0</div>
<div class="a" style="left:1171px;top:308px;width:1px;height:14px;background:#3b7fd0;z-index:6"></div>
<div class="t" style="left:1173px;top:343px;font-size:14px;color:#1a1a1a;z-index:6">0</div>
<div class="a" style="left:1171px;top:344px;width:1px;height:14px;background:#3b7fd0;z-index:6"></div>
<div class="t" style="left:1173px;top:377px;font-size:14px;color:#1a1a1a;z-index:6">0</div>
<div class="a" style="left:1171px;top:378px;width:1px;height:14px;background:#3b7fd0;z-index:6"></div>
<div class="t" style="left:1173px;top:412px;font-size:14px;color:#1a1a1a;z-index:6">0</div>
<div class="a" style="left:1171px;top:413px;width:1px;height:14px;background:#3b7fd0;z-index:6"></div>
<div class="t" style="left:1173px;top:447px;font-size:14px;color:#1a1a1a;z-index:6">1</div>
<div class="a" style="left:1171px;top:448px;width:1px;height:14px;background:#3b7fd0;z-index:6"></div>
<div class="t" style="left:1173px;top:482px;font-size:14px;color:#1a1a1a;z-index:6">1</div>
<div class="a" style="left:1171px;top:483px;width:1px;height:14px;background:#3b7fd0;z-index:6"></div>

<div class="a" id="menu" style="left:152px;top:192px;width:341px;height:520px;background:#3c3f41;border:1px solid #555"></div>
<div class="t" style="left:177px;top:196px">New</div>
<svg style="left:478px;top:199px" width="5" height="9" viewBox="0 0 5 9" ><path d="M0 0L5 4.500L0 9z" fill="#bdbfc1"/></svg>
<div class="a" style="left:153px;top:215px;width:339px;height:1px;background:#515151"></div>
<svg style="left:157px;top:220px" width="14" height="14" viewBox="0 0 14 14" ><circle cx="2.700" cy="3.200" r="1.900" fill="none" stroke="#afb1b3" stroke-width="1.600"/><circle cx="2.700" cy="10.800" r="1.900" fill="none" stroke="#afb1b3" stroke-width="1.600"/><path d="M4.200 4.400L13.300 12.300M4.200 9.600L13.300 1.700" stroke="#afb1b3" stroke-width="1.900"/></svg>
<div class="t" style="left:177px;top:220px">Cu<u>t</u></div>
<div class="t" style="right:698px;top:220px">Ctrl+X</div>
<svg style="left:158px;top:241px" width="13" height="14" viewBox="0 0 13 14" ><path d="M0.700 9V0.700H9" fill="none" stroke="#afb1b3" stroke-width="1.400"/><rect x="3" y="3" width="10" height="11" fill="#afb1b3"/><path d="M5 6h6M5 8.500h6M5 11h6" stroke="#3c3f41" stroke-width="1"/></svg>
<div class="t" style="left:177px;top:241px"><u>C</u>opy</div>
<div class="t" style="right:698px;top:241px">Ctrl+C</div>
<div class="t" style="left:177px;top:262px">Cop<u>y</u> Reference</div>
<div class="t" style="right:698px;top:262px">Ctrl+Alt+Shift+C</div>
<div class="t" style="left:177px;top:283px">Copy Path...</div>
<svg style="left:158px;top:304px" width="11" height="14" viewBox="0 0 11 14" ><rect x="0" y="2" width="11" height="12" fill="#afb1b3"/><rect x="2" y="4.500" width="7" height="7.500" fill="#3c3f41"/><rect x="3" y="0" width="5" height="4" fill="#afb1b3"/></svg>
<div class="t" style="left:177px;top:304px"><u>P</u>aste</div>
<div class="t" style="right:698px;top:304px">Ctrl+V</div>
<div class="a" style="left:153px;top:323px;width:339px;height:1px;background:#515151"></div>
<div class="t" style="left:177px;top:328px">Find <u>U</u>sages</div>
<div class="t" style="right:698px;top:328px">Alt+F7</div>
<div class="t" style="left:177px;top:349px">Analy<u>z</u>e</div>
<svg style="left:478px;top:352px" width="5" height="9" viewBox="0 0 5 9" ><path d="M0 0L5 4.500L0 9z" fill="#bdbfc1"/></svg>
<div class="a" style="left:153px;top:368px;width:339px;height:1px;background:#515151"></div>
<div class="t" style="left:177px;top:373px"><u>R</u>efactor</div>
<svg style="left:478px;top:376px" width="5" height="9" viewBox="0 0 5 9" ><path d="M0 0L5 4.500L0 9z" fill="#bdbfc1"/></svg>
<div class="a" style="left:153px;top:392px;width:339px;height:1px;background:#515151"></div>
<div class="t" style="left:177px;top:397px">Add to F<u>a</u>vorites</div>
<svg style="left:478px;top:400px" width="5" height="9" viewBox="0 0 5 9" ><path d="M0 0L5 4.500L0 9z" fill="#bdbfc1"/></svg>
<div class="a" style="left:153px;top:416px;width:339px;height:1px;background:#515151"></div>
<div class="t" style="left:177px;top:421px">Browse Type Hierarchy</div>
<div class="t" style="right:698px;top:421px">Ctrl+H</div>
<div class="t" style="left:177px;top:442px"><u>R</u>eformat Code</div>
<div class="t" style="right:698px;top:442px">Ctrl+Alt+L</div>
<div class="t" style="left:177px;top:463px">Optimi<u>z</u>e Imports</div>
<div class="t" style="right:698px;top:463px">Ctrl+Alt+O</div>
<div class="t" style="left:177px;top:484px"><u>D</u>elete...</div>
<div class="t" style="right:698px;top:484px">Delete</div>
<div class="a" style="left:153px;top:503px;width:339px;height:1px;background:#515151"></div>
<div class="t" style="left:177px;top:508px">Build <u>M</u>odule 'IdeaCode'</div>
<div class="t" style="left:177px;top:529px">R<u>e</u>compile 'Day03.java'</div>
<div class="t" style="right:698px;top:529px">Ctrl+Shift+F9</div>
<svg style="left:160px;top:551px" width="10" height="12" viewBox="0 0 10 12" ><path d="M0 0L10 6L0 12z" fill="#499c54"/></svg>
<div class="t" style="left:177px;top:550px">R<u>u</u>n 'Day03.main()'</div>
<div class="t" style="right:698px;top:550px">Ctrl+Shift+F10</div>
<svg style="left:158px;top:571px" width="13" height="14" viewBox="0 0 13 14" ><path d="M3 0.300L5.300 3M10 0.300L7.700 3" stroke="#499c54" stroke-width="1.300" fill="none"/><rect x="2.500" y="2.300" width="8" height="11.700" rx="3.800" fill="#499c54"/><path d="M0.300 5.200h12.400M0.300 8.600h12.400M0.300 12h12.400" stroke="#499c54" stroke-width="1.400"/><path d="M4 6.900h5M4 10.300h5" stroke="#3c3f41" stroke-width="1.100"/></svg>
<div class="t" style="left:177px;top:571px"><u>D</u>ebug 'Day03.main()'</div>
<svg style="left:157px;top:593px" width="16" height="15" viewBox="0 0 16 15" ><path d="M0 0.500h5.500v11.500c-3-1.200-5.500-3.500-5.500-6.500z" fill="#b4b6b8"/><path d="M5.500 0.500H10.500v5c0 3-2.500 5.300-5 6.500z" fill="#6e7275"/><path d="M6.500 4L16 9.500L6.500 15z" fill="#3c3f41"/><path d="M8 6L15 9.900L8 13.800z" fill="#499c54"/></svg>
<div class="t" style="left:177px;top:592px;letter-spacing:-0.070px">Run 'Day03.main()' with Co<u>v</u>erage</div>
<svg style="left:157px;top:613px" width="16" height="16" viewBox="0 0 16 16" ><circle cx="6" cy="6" r="5.300" fill="none" stroke="#afb1b3" stroke-width="1.300"/><path d="M6 2.500v3.700l-2 2" stroke="#afb1b3" stroke-width="1.200" fill="none"/><path d="M6.500 4L16 9.500L6.500 15z" fill="#3c3f41"/><path d="M8 6L15 9.900L8 13.800z" fill="#e05555"/></svg>
<div class="t" style="left:177px;top:613px;letter-spacing:-0.070px">Run 'Day03.main()' with 'Java Flight Recorder'</div>
<div class="a" style="left:153px;top:632px;width:339px;height:1px;background:#515151"></div>
<svg style="left:157px;top:637px" width="15" height="13" viewBox="0 0 15 13" ><rect x="3.500" y="0.500" width="10.500" height="8.500" fill="none" stroke="#7f8b91"/><rect x="0.500" y="3.500" width="11" height="9" fill="#3c3f41" stroke="#9aa7b0"/><rect x="2" y="6" width="8" height="5" fill="#3a85a8"/></svg>
<div class="t" style="left:177px;top:637px">Create 'Day03.main()'...</div>
<div class="a" style="left:153px;top:656px;width:339px;height:1px;background:#515151"></div>
<div class="a" style="left:153px;top:658px;width:339px;height:21px;background:#4b6eaf"></div>
<div class="t" style="left:177px;top:661px">Show in Explorer</div>
<div class="t" style="left:177px;top:682px">File Path</div>
<div class="t" style="right:698px;top:682px">Ctrl+Alt+F12</div>

<svg style="left:0px;top:0px" width="1178" height="694" viewBox="0 0 1178 694" style="left:0;top:0;pointer-events:none"><path d="M559.700 611L429.500 650L427.200 645.400L413.800 657.800L431.600 660.800L430.800 655.500z" fill="#fb2f2f"/></svg>

</body></html>
